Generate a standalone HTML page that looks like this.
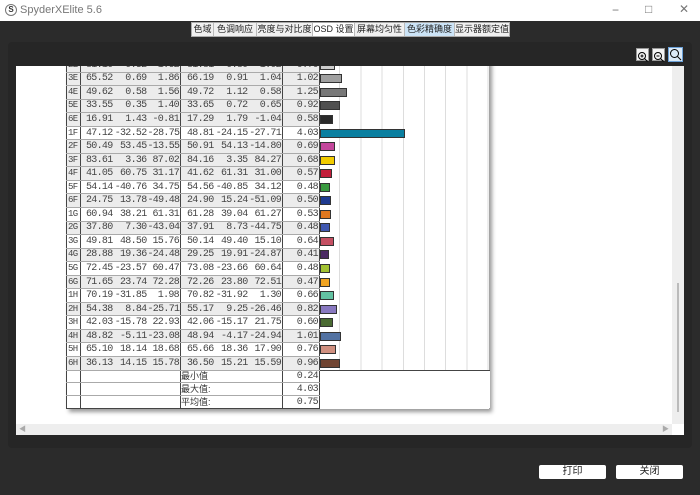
<!DOCTYPE html>
<html><head><meta charset="utf-8"><style>
*{margin:0;padding:0;box-sizing:border-box}
body{width:700px;height:495px;background:#2b2b2b;position:relative;overflow:hidden;font-family:"Liberation Sans","Noto Sans CJK SC",sans-serif}
.title{position:absolute;left:0;top:0;width:700px;height:21px;background:#fff;}
.title span{position:absolute;left:20px;top:4px;font-size:11px;color:#777}
.logo{position:absolute;left:5px;top:4px;width:12px;height:12px;border:1px solid #777;border-radius:50%;font-size:8px;text-align:center;line-height:10px;color:#333;font-weight:bold}
.wc{position:absolute;top:3px;font-size:12px;color:#777}
.panel{position:absolute;left:8px;top:42px;width:684px;height:406px;background:#262626;border-radius:4px}
.tabs{position:absolute;left:191px;top:22px;height:15px;display:flex;background:#f0f0f0;border:1px solid #aaa}
.tabs div{font-size:9px;line-height:13px;text-align:center;border-right:1px solid #bbb;color:#222;white-space:nowrap;overflow:hidden;font-family:"Liberation Sans","Noto Sans CJK SC",sans-serif}
.tabs .osd{background:#fff}
.tabs .sel{background:#cce4f7}
.zi{position:absolute;top:48px;width:13px;height:13px;background:#f4f4f4;border:1px solid #999}
.white{position:absolute;left:16px;top:66px;width:656px;height:358px;background:#fff;overflow:hidden}
.vs{position:absolute;left:672px;top:66px;width:12px;height:358px;background:#eee}
.vs i{position:absolute;left:5px;top:217px;width:2px;height:129px;background:#bbb}
.hs{position:absolute;left:16px;top:424px;width:656px;height:11px;background:#eee}
.corner{position:absolute;left:672px;top:424px;width:12px;height:11px;background:#fff}
.page{position:absolute;left:50px;top:-8px;width:423px;background:#fff;box-shadow:3px 3px 4px #999}
.grid{position:absolute;left:253px;top:0;width:170px;height:312px;background:repeating-linear-gradient(90deg,transparent 0,transparent 20.2px,#ddd 20.2px,#ddd 21.2px)}
table{position:relative;width:423px;border-collapse:collapse;table-layout:fixed;font-family:"Liberation Mono","Noto Serif CJK SC",monospace;font-size:10px;letter-spacing:-0.7px;color:#444}
td{height:13.55px;border-top:1px solid #aaa;border-bottom:1px solid #aaa;text-align:right;padding:0 1px 0 0;white-space:nowrap;overflow:hidden;line-height:11px}
tr.g td.d{background:#ececec}
td.l{text-align:left;padding:0 0 0 1px;border-left:1px solid #444;border-right:1px solid #444;font-size:9px}
td.b1{border-left:1px solid #444}
td.e{border-left:1px solid #444;border-right:1px solid #444}
td.c{border:none;text-align:left;padding:0;background:transparent}
td.c b{display:block;height:9px;border:1px solid #333}
tr.s td{height:12.8px;background:#fff}
tr.s td.t{text-align:left;font-family:"Liberation Sans","Noto Sans CJK SC",sans-serif;font-size:9px;letter-spacing:0;color:#333;border-left:1px solid #444}
.btn{position:absolute;top:465px;height:14px;width:67px;background:#fff;border-radius:2px;font-size:10px;text-align:center;line-height:14px;color:#222}
</style></head><body>
<div class="title"><div class="logo">S</div><span>SpyderXElite 5.6</span>
<div class="wc" style="left:612px">−</div><div class="wc" style="left:645px;top:2px">□</div><div class="wc" style="left:679px;top:2px">✕</div></div>
<div class="panel"></div>
<div class="tabs"><div style="width:22px">色域</div><div style="width:43px">色调响应</div><div style="width:56px">亮度与对比度</div><div class="osd" style="width:42px">OSD 设置</div><div style="width:50px">屏幕均匀性</div><div class="sel" style="width:50px">色彩精确度</div><div style="width:54px;border-right:none">显示器额定值</div></div>
<div class="zi" style="left:636px"><svg width="11" height="11"><circle cx="5" cy="5" r="3.5" fill="none" stroke="#000"/><path d="M3.5 5h3M5 3.5v3M7.5 7.5l3 3" stroke="#000"/></svg></div>
<div class="zi" style="left:652px"><svg width="11" height="11"><circle cx="5" cy="5" r="3.5" fill="none" stroke="#000"/><path d="M3.5 5h3M7.5 7.5l3 3" stroke="#000"/></svg></div>
<div class="zi" style="left:668px;width:15px;height:15px;top:47px;background:#dbeaf7;border-color:#6aa0d8"><svg width="13" height="13"><circle cx="5.5" cy="5.5" r="4" fill="none" stroke="#000"/><path d="M8.5 8.5l3.5 3.5" stroke="#000"/></svg></div>
<div class="white">
<div class="page">
<div class="grid"></div>
<table>
<colgroup><col style="width:14px"><col style="width:33px"><col style="width:34px"><col style="width:33px"><col style="width:34px"><col style="width:34px"><col style="width:34px"><col style="width:37px"><col style="width:170px"></colgroup>
<tr class="g"><td class="l d">2E</td><td class="d b1">81.10</td><td class="d">0.52</td><td class="d">1.62</td><td class="d b1">81.81</td><td class="d">0.80</td><td class="d">1.02</td><td class="d e">0.70</td><td class="c"><b style="width:15px;background:#ccc"></b></td></tr>
<tr class="g"><td class="l d">3E</td><td class="d b1">65.52</td><td class="d">0.69</td><td class="d">1.86</td><td class="d b1">66.19</td><td class="d">0.91</td><td class="d">1.04</td><td class="d e">1.02</td><td class="c"><b style="width:22px;background:#a0a0a0"></b></td></tr>
<tr class="g"><td class="l d">4E</td><td class="d b1">49.62</td><td class="d">0.58</td><td class="d">1.56</td><td class="d b1">49.72</td><td class="d">1.12</td><td class="d">0.58</td><td class="d e">1.25</td><td class="c"><b style="width:27px;background:#787878"></b></td></tr>
<tr class="g"><td class="l d">5E</td><td class="d b1">33.55</td><td class="d">0.35</td><td class="d">1.40</td><td class="d b1">33.65</td><td class="d">0.72</td><td class="d">0.65</td><td class="d e">0.92</td><td class="c"><b style="width:20px;background:#505050"></b></td></tr>
<tr class="g"><td class="l d">6E</td><td class="d b1">16.91</td><td class="d">1.43</td><td class="d">-0.81</td><td class="d b1">17.29</td><td class="d">1.79</td><td class="d">-1.04</td><td class="d e">0.58</td><td class="c"><b style="width:13px;background:#2a2a2a"></b></td></tr>
<tr><td class="l d">1F</td><td class="d b1">47.12</td><td class="d">-32.52</td><td class="d">-28.75</td><td class="d b1">48.81</td><td class="d">-24.15</td><td class="d">-27.71</td><td class="d e">4.03</td><td class="c"><b style="width:85px;background:#0a7fa0"></b></td></tr>
<tr class="g"><td class="l d">2F</td><td class="d b1">50.49</td><td class="d">53.45</td><td class="d">-13.55</td><td class="d b1">50.91</td><td class="d">54.13</td><td class="d">-14.80</td><td class="d e">0.69</td><td class="c"><b style="width:15px;background:#c4479c"></b></td></tr>
<tr class="g"><td class="l d">3F</td><td class="d b1">83.61</td><td class="d">3.36</td><td class="d">87.02</td><td class="d b1">84.16</td><td class="d">3.35</td><td class="d">84.27</td><td class="d e">0.68</td><td class="c"><b style="width:15px;background:#f2cc00"></b></td></tr>
<tr class="g"><td class="l d">4F</td><td class="d b1">41.05</td><td class="d">60.75</td><td class="d">31.17</td><td class="d b1">41.62</td><td class="d">61.31</td><td class="d">31.00</td><td class="d e">0.57</td><td class="c"><b style="width:12px;background:#c21e3a"></b></td></tr>
<tr><td class="l d">5F</td><td class="d b1">54.14</td><td class="d">-40.76</td><td class="d">34.75</td><td class="d b1">54.56</td><td class="d">-40.85</td><td class="d">34.12</td><td class="d e">0.48</td><td class="c"><b style="width:10px;background:#3a9a40"></b></td></tr>
<tr class="g"><td class="l d">6F</td><td class="d b1">24.75</td><td class="d">13.78</td><td class="d">-49.48</td><td class="d b1">24.90</td><td class="d">15.24</td><td class="d">-51.09</td><td class="d e">0.50</td><td class="c"><b style="width:11px;background:#1e3a90"></b></td></tr>
<tr><td class="l d">1G</td><td class="d b1">60.94</td><td class="d">38.21</td><td class="d">61.31</td><td class="d b1">61.28</td><td class="d">39.04</td><td class="d">61.27</td><td class="d e">0.53</td><td class="c"><b style="width:11px;background:#e07820"></b></td></tr>
<tr class="g"><td class="l d">2G</td><td class="d b1">37.80</td><td class="d">7.30</td><td class="d">-43.04</td><td class="d b1">37.91</td><td class="d">8.73</td><td class="d">-44.75</td><td class="d e">0.48</td><td class="c"><b style="width:10px;background:#4058b0"></b></td></tr>
<tr><td class="l d">3G</td><td class="d b1">49.81</td><td class="d">48.50</td><td class="d">15.76</td><td class="d b1">50.14</td><td class="d">49.40</td><td class="d">15.10</td><td class="d e">0.64</td><td class="c"><b style="width:14px;background:#c44f62"></b></td></tr>
<tr class="g"><td class="l d">4G</td><td class="d b1">28.88</td><td class="d">19.36</td><td class="d">-24.48</td><td class="d b1">29.25</td><td class="d">19.91</td><td class="d">-24.87</td><td class="d e">0.41</td><td class="c"><b style="width:9px;background:#4a2a62"></b></td></tr>
<tr><td class="l d">5G</td><td class="d b1">72.45</td><td class="d">-23.57</td><td class="d">60.47</td><td class="d b1">73.08</td><td class="d">-23.66</td><td class="d">60.64</td><td class="d e">0.48</td><td class="c"><b style="width:10px;background:#a2c232"></b></td></tr>
<tr class="g"><td class="l d">6G</td><td class="d b1">71.65</td><td class="d">23.74</td><td class="d">72.28</td><td class="d b1">72.26</td><td class="d">23.80</td><td class="d">72.51</td><td class="d e">0.47</td><td class="c"><b style="width:10px;background:#f0a422"></b></td></tr>
<tr><td class="l d">1H</td><td class="d b1">70.19</td><td class="d">-31.85</td><td class="d">1.98</td><td class="d b1">70.82</td><td class="d">-31.92</td><td class="d">1.30</td><td class="d e">0.66</td><td class="c"><b style="width:14px;background:#62c2a2"></b></td></tr>
<tr class="g"><td class="l d">2H</td><td class="d b1">54.38</td><td class="d">8.84</td><td class="d">-25.71</td><td class="d b1">55.17</td><td class="d">9.25</td><td class="d">-26.46</td><td class="d e">0.82</td><td class="c"><b style="width:17px;background:#8878c0"></b></td></tr>
<tr><td class="l d">3H</td><td class="d b1">42.03</td><td class="d">-15.78</td><td class="d">22.93</td><td class="d b1">42.06</td><td class="d">-15.17</td><td class="d">21.75</td><td class="d e">0.60</td><td class="c"><b style="width:13px;background:#4a6a32"></b></td></tr>
<tr class="g"><td class="l d">4H</td><td class="d b1">48.82</td><td class="d">-5.11</td><td class="d">-23.08</td><td class="d b1">48.94</td><td class="d">-4.17</td><td class="d">-24.94</td><td class="d e">1.01</td><td class="c"><b style="width:21px;background:#5272a2"></b></td></tr>
<tr><td class="l d">5H</td><td class="d b1">65.10</td><td class="d">18.14</td><td class="d">18.68</td><td class="d b1">65.66</td><td class="d">18.36</td><td class="d">17.90</td><td class="d e">0.76</td><td class="c"><b style="width:16px;background:#d09080"></b></td></tr>
<tr class="g"><td class="l d">6H</td><td class="d b1">36.13</td><td class="d">14.15</td><td class="d">15.78</td><td class="d b1">36.50</td><td class="d">15.21</td><td class="d">15.59</td><td class="d e">0.96</td><td class="c"><b style="width:20px;background:#704432"></b></td></tr>
<tr class="s"><td class="l"></td><td colspan="3" class="b1"></td><td colspan="3" class="t">最小值</td><td class="e">0.24</td><td style="border:none;border-top:1px solid #444"></td></tr>
<tr class="s"><td class="l"></td><td colspan="3" class="b1"></td><td colspan="3" class="t">最大值:</td><td class="e">4.03</td><td style="border:none"></td></tr>
<tr class="s"><td class="l" style="border-bottom:1px solid #444"></td><td colspan="3" class="b1" style="border-bottom:1px solid #444"></td><td colspan="3" class="t" style="border-bottom:1px solid #444">平均值:</td><td class="e" style="border-bottom:1px solid #444">0.75</td><td style="border:none"></td></tr>
</table>
</div>
</div>
<div class="vs"><i></i></div>
<div class="hs"><span style="position:absolute;left:3px;top:0;font-size:7px;color:#aaa">◀</span><span style="position:absolute;right:3px;top:0;font-size:7px;color:#aaa">▶</span></div>
<div class="corner"></div>
<div class="btn" style="left:539px">打印</div>
<div class="btn" style="left:616px">关闭</div>
</body></html>
